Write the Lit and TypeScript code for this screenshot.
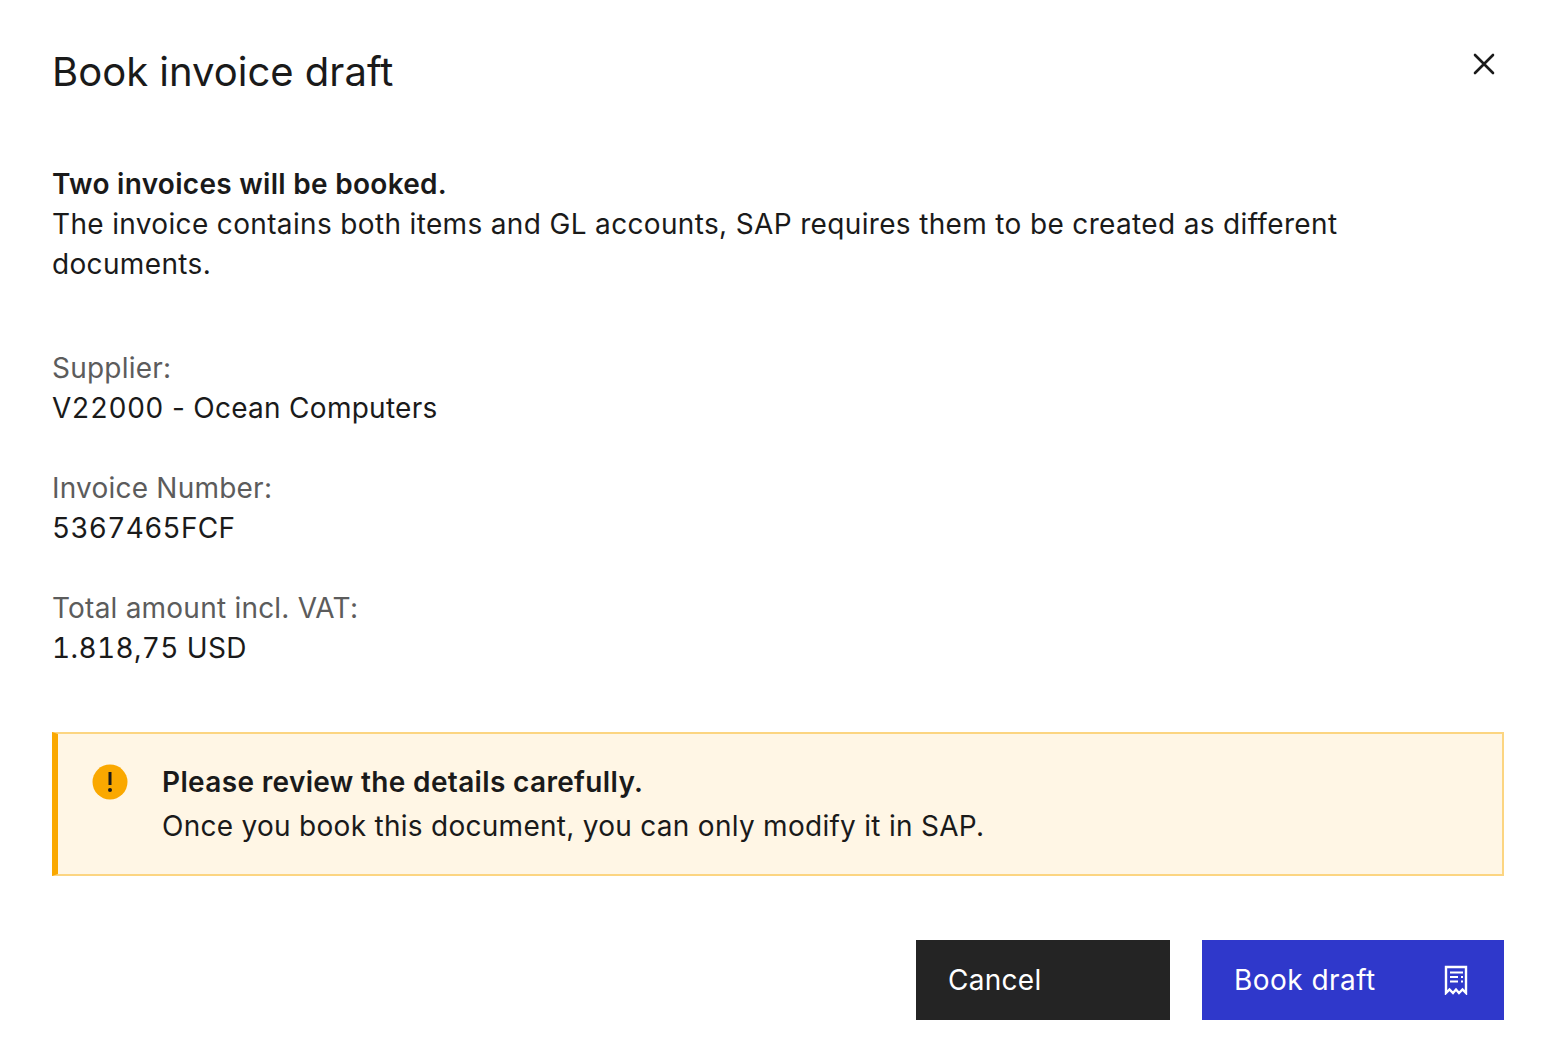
import { LitElement, html, css } from "lit";
import { customElement } from "lit/decorators.js";

@customElement("app-root")
class AppRoot extends LitElement {
  static override styles = css`
    :host {
      display: block;
      box-sizing: border-box;
      height: 1048px;
      padding: 44px 44px 28px 52px;
      background: #fff;
      color: #1a1a1a;
      font-family: Inter, "Liberation Sans", sans-serif;
      font-size: 28px;
      line-height: 40px;
      letter-spacing: 0.28px;
    }

    .num {
      font-variant-numeric: tabular-nums;
    }

    .amount {
      letter-spacing: 0.36px;
    }

    .header {
      display: flex;
      justify-content: space-between;
      align-items: flex-start;
      height: 56px;
    }

    h1 {
      margin: 0;
      font-size: 40px;
      font-weight: 400;
      line-height: 56px;
      letter-spacing: 0;
    }

    .close {
      display: block;
      margin: 5px 8px 0 0;
      padding: 0;
      border: 0;
      background: none;
      width: 24px;
      height: 32px;
    }

    .intro {
      margin: 64px 0 0;
      max-width: 1300px;
      letter-spacing: 0.345px;
    }

    .intro strong {
      letter-spacing: 0.29px;
    }

    strong {
      font-weight: 600;
      letter-spacing: 0.34px;
    }

    .fields {
      margin-top: 64px;
      display: flex;
      flex-direction: column;
      gap: 40px;
    }

    .field-label {
      color: #5c5c5c;
      letter-spacing: 0.22px;
    }

    .notice {
      box-sizing: border-box;
      margin-top: 64px;
      height: 144px;
      display: flex;
      gap: 34px;
      padding: 26px 32px 0 34px;
      background: #fff6e5;
      border: 2px solid #fcd581;
      border-left: 6px solid #faa800;
    }

    .notice svg {
      flex: none;
      margin-top: 4px;
    }

    .notice p {
      margin: 0;
      line-height: 44px;
    }

    .actions {
      margin-top: 64px;
      display: flex;
      justify-content: flex-end;
      gap: 32px;
    }

    button.action {
      box-sizing: border-box;
      height: 80px;
      padding: 0 36px 0 32px;
      border: 0;
      color: #fff;
      font: inherit;
      letter-spacing: inherit;
      display: flex;
      align-items: center;
      justify-content: space-between;
      text-align: left;
    }

    .cancel {
      width: 254px;
      background: #242424;
    }

    button.book {
      width: 302px;
      background: #2f38cb;
      letter-spacing: 0.46px;
    }
  `;

  override render() {
    return html`
      <div class="header">
        <h1>Book invoice draft</h1>
        <button class="close" aria-label="Close">
          <svg width="24" height="24" viewBox="0 0 24 24" fill="none">
            <path d="M3 3 21 21M21 3 3 21" stroke="#1a1a1a" stroke-width="2.6" stroke-linecap="round" />
          </svg>
        </button>
      </div>

      <p class="intro">
        <strong>Two invoices will be booked.</strong><br />
        The invoice contains both items and GL accounts, SAP requires them to be
        created as different documents.
      </p>

      <div class="fields">
        <div>
          <div class="field-label">Supplier:</div>
          <div><span class="num">V22000</span> - Ocean Computers</div>
        </div>
        <div>
          <div class="field-label">Invoice Number:</div>
          <div class="num">5367465FCF</div>
        </div>
        <div>
          <div class="field-label">Total amount incl. VAT:</div>
          <div class="num amount">1.818,75 USD</div>
        </div>
      </div>

      <div class="notice">
        <svg width="36" height="36" viewBox="0 0 36 36">
          <circle cx="18" cy="18" r="17.5" fill="#faa800" />
          <path d="M18 8v13" stroke="#1a1a1a" stroke-width="3" />
          <circle cx="18" cy="26" r="2" fill="#1a1a1a" />
        </svg>
        <p>
          <strong>Please review the details carefully.</strong><br />
          Once you book this document, you can only modify it in SAP.
        </p>
      </div>

      <div class="actions">
        <button class="action cancel">Cancel</button>
        <button class="action book">
          Book draft
          <svg width="24" height="30" viewBox="0 0 24 30" fill="none">
            <path d="M2 2H22V28L18.5 24.5 15 28 12 24.5 9 28 5.5 24.5 2 28Z" stroke="#fff" stroke-width="2.4" />
            <path d="M6 7.5H19M6 12H14M6 16.5H14M17 12H19M17 16.5H19" stroke="#fff" stroke-width="2" />
          </svg>
        </button>
      </div>
    `;
  }
}

void AppRoot;
